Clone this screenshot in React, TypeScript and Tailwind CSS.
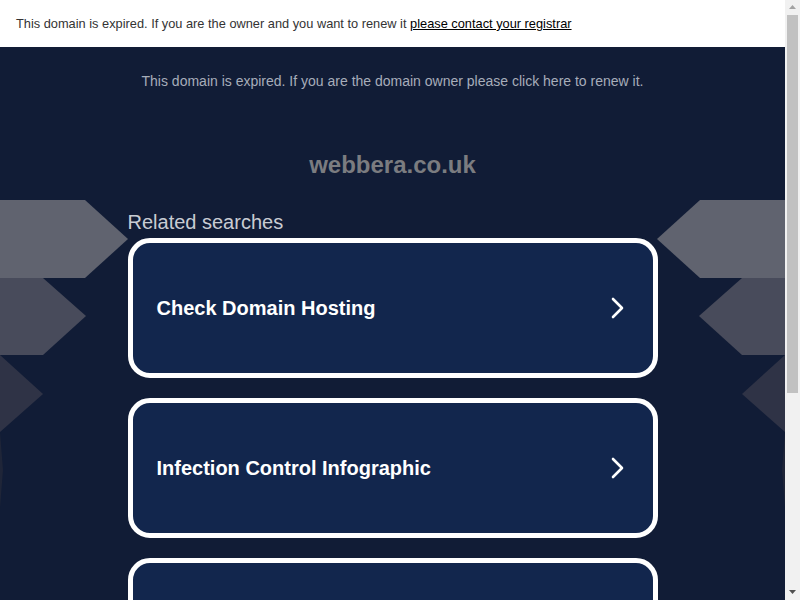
import React from 'react';

const searches = [
    'Check Domain Hosting',
    'Infection Control Infographic',
    'Web Hosting Services',
];

function Arrows({ flip }: { flip?: boolean }) {
    return (
        <svg
            className={flip ? 'absolute right-0 top-[153px] -scale-x-100' : 'absolute left-0 top-[153px]'}
            width="130"
            height="320"
            viewBox="0 0 130 320"
        >
            <polygon points="0,0 85,0 128,39 85,78 0,78" fill="#60636f" />
            <polygon points="0,78 43,78 86,116 43,155 0,155" fill="#484b5b" />
            <polygon points="0,155 43,194 0,232" fill="#2f3346" />
            <polygon points="0,232 3,270 0,308" fill="#1f2538" />
        </svg>
    );
}

function Scrollbar() {
    return (
        <div className="w-[15px] shrink-0 bg-[#f1f1f1] flex flex-col items-center">
            <svg width="15" height="15" viewBox="0 0 15 15">
                <polygon points="4,9 11,9 7.5,5" fill="#a3a3a3" />
            </svg>
            <div className="w-[11px] h-[378px] bg-[#c1c1c1]" />
            <div className="flex-1" />
            <svg width="15" height="15" viewBox="0 0 15 15">
                <polygon points="4,5 11,5 7.5,9" fill="#505050" />
            </svg>
        </div>
    );
}

export default function App() {
    return (
        <div className="h-screen flex overflow-hidden font-['Liberation_Sans',Arial,sans-serif]">
            <div className="flex-1 bg-[#111c36] overflow-hidden">
                {/* Expired bar */}
                <div className="h-[47px] bg-white flex items-center px-4 text-[12.8px] text-[#333]">
                    <span>
                        This domain is expired. If you are the owner and you want to renew it{' '}
                        <a href="#" className="text-black underline">please contact your registrar</a>
                    </span>
                </div>

                <div className="relative pt-[26px] pb-10">
                    <Arrows />
                    <Arrows flip />

                    <p className="relative text-center text-[14px] leading-4 text-[#a7adba]">
                        This domain is expired. If you are the domain owner please click here to renew it.
                    </p>

                    <h1 className="relative mt-[62px] text-center text-[24px] leading-7 font-bold text-[#7b7c80]">
                        webbera.co.uk
                    </h1>

                    <div className="relative mx-auto w-[530px]">
                        <h2 className="pt-[31px] text-[20px] leading-6 text-[#c9ccd3]">Related searches</h2>
                        <div className="mt-[4px] flex flex-col gap-5">
                            {searches.map(s => (
                                <a
                                    key={s}
                                    href="#"
                                    className="h-[140px] rounded-[22px] border-[5px] border-white bg-[#12264d] flex items-center justify-between pl-6 pr-[28px]"
                                >
                                    <span className="text-[20px] font-bold text-white">{s}</span>
                                    <svg width="14" height="22" viewBox="0 0 14 22" fill="none">
                                        <polyline
                                            points="2,2 11,11 2,20"
                                            stroke="white"
                                            strokeWidth="2.6"
                                            strokeLinecap="round"
                                            strokeLinejoin="round"
                                        />
                                    </svg>
                                </a>
                            ))}
                        </div>
                    </div>
                </div>
            </div>
            <Scrollbar />
        </div>
    );
}
